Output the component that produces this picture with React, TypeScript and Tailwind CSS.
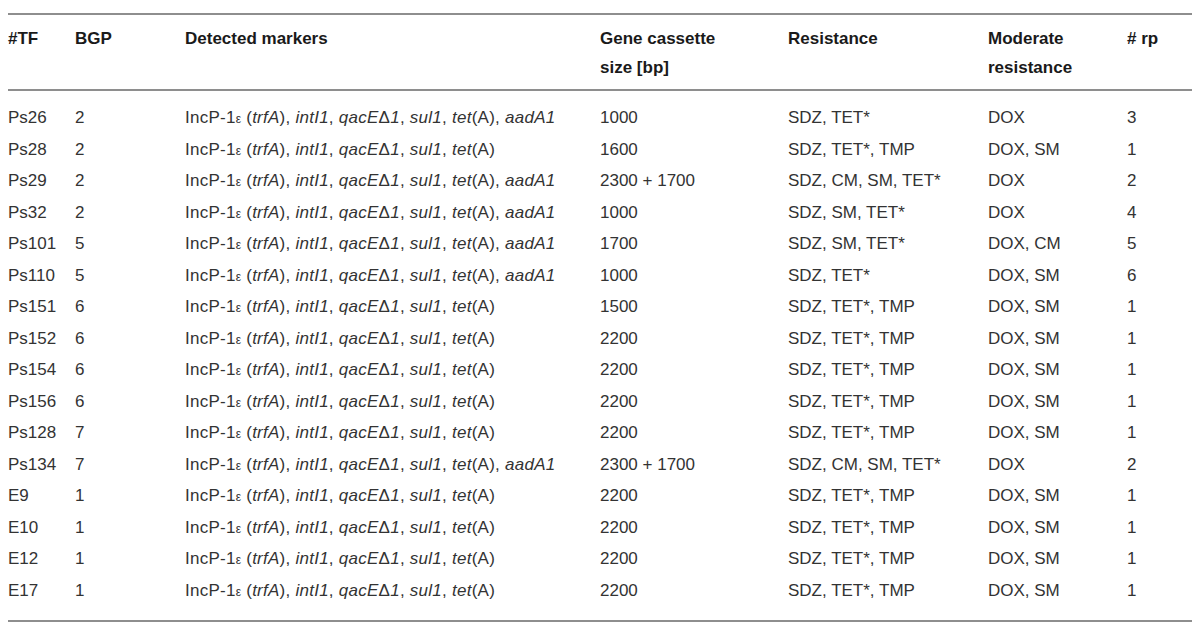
import React from 'react';

type Row = {
  tf: string;
  bgp: string;
  aad: boolean;
  size: string;
  resistance: string;
  moderate: string;
  rp: string;
};

const rows: Row[] = [
  { tf: 'Ps26', bgp: '2', aad: true, size: '1000', resistance: 'SDZ, TET*', moderate: 'DOX', rp: '3' },
  { tf: 'Ps28', bgp: '2', aad: false, size: '1600', resistance: 'SDZ, TET*, TMP', moderate: 'DOX, SM', rp: '1' },
  { tf: 'Ps29', bgp: '2', aad: true, size: '2300 + 1700', resistance: 'SDZ, CM, SM, TET*', moderate: 'DOX', rp: '2' },
  { tf: 'Ps32', bgp: '2', aad: true, size: '1000', resistance: 'SDZ, SM, TET*', moderate: 'DOX', rp: '4' },
  { tf: 'Ps101', bgp: '5', aad: true, size: '1700', resistance: 'SDZ, SM, TET*', moderate: 'DOX, CM', rp: '5' },
  { tf: 'Ps110', bgp: '5', aad: true, size: '1000', resistance: 'SDZ, TET*', moderate: 'DOX, SM', rp: '6' },
  { tf: 'Ps151', bgp: '6', aad: false, size: '1500', resistance: 'SDZ, TET*, TMP', moderate: 'DOX, SM', rp: '1' },
  { tf: 'Ps152', bgp: '6', aad: false, size: '2200', resistance: 'SDZ, TET*, TMP', moderate: 'DOX, SM', rp: '1' },
  { tf: 'Ps154', bgp: '6', aad: false, size: '2200', resistance: 'SDZ, TET*, TMP', moderate: 'DOX, SM', rp: '1' },
  { tf: 'Ps156', bgp: '6', aad: false, size: '2200', resistance: 'SDZ, TET*, TMP', moderate: 'DOX, SM', rp: '1' },
  { tf: 'Ps128', bgp: '7', aad: false, size: '2200', resistance: 'SDZ, TET*, TMP', moderate: 'DOX, SM', rp: '1' },
  { tf: 'Ps134', bgp: '7', aad: true, size: '2300 + 1700', resistance: 'SDZ, CM, SM, TET*', moderate: 'DOX', rp: '2' },
  { tf: 'E9', bgp: '1', aad: false, size: '2200', resistance: 'SDZ, TET*, TMP', moderate: 'DOX, SM', rp: '1' },
  { tf: 'E10', bgp: '1', aad: false, size: '2200', resistance: 'SDZ, TET*, TMP', moderate: 'DOX, SM', rp: '1' },
  { tf: 'E12', bgp: '1', aad: false, size: '2200', resistance: 'SDZ, TET*, TMP', moderate: 'DOX, SM', rp: '1' },
  { tf: 'E17', bgp: '1', aad: false, size: '2200', resistance: 'SDZ, TET*, TMP', moderate: 'DOX, SM', rp: '1' },
];

// column template shared by header and body
const cols = 'grid grid-cols-[67px_110px_415px_188px_200px_139px_1fr]';

const Markers: React.FC<{ aad: boolean }> = ({ aad }) => (
  <span className="tracking-[0.25px]">
    IncP-1<span className="text-[12px]">ε</span> (<i>trfA</i>), <i>intI1</i>, <i>qacE</i>Δ<i>1</i>, <i>sul1</i>,{' '}
    <i>tet</i>(A){aad && (<>, <i>aadA1</i></>)}
  </span>
);

const App: React.FC = () => {
  return (
    <div className="w-[1200px] h-[627px] bg-white px-2 pt-[13px] font-['Liberation_Sans',Arial,sans-serif] text-[17px] text-[#333]">
      <div className={`${cols} border-y-2 border-[#8e8e8e] pt-[9px] pb-[7px] font-bold text-[#1a1a1a] leading-[29px]`}>
        <div>#TF</div>
        <div>BGP</div>
        <div>Detected markers</div>
        <div>Gene cassette<br />size [bp]</div>
        <div>Resistance</div>
        <div>Moderate<br />resistance</div>
        <div># rp</div>
      </div>
      <div className="border-b-2 border-[#8e8e8e] pt-[11px] pb-[14px]">
        {rows.map(r => (
          <div key={r.tf} className={`${cols} h-[31.5px] items-center`}>
            <div>{r.tf}</div>
            <div>{r.bgp}</div>
            <div className="whitespace-nowrap"><Markers aad={r.aad} /></div>
            <div>{r.size}</div>
            <div>{r.resistance}</div>
            <div>{r.moderate}</div>
            <div>{r.rp}</div>
          </div>
        ))}
      </div>
    </div>
  );
};

export default App;
